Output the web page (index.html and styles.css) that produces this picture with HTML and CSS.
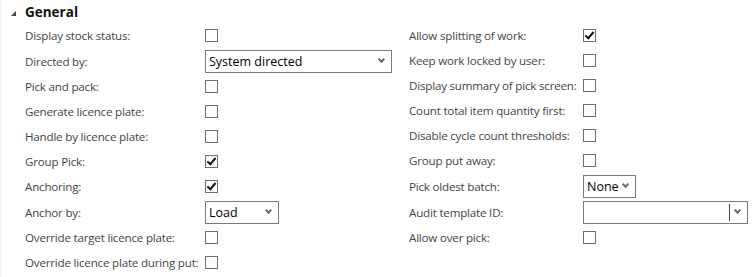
FILE: index.html
```html
<!DOCTYPE html>
<html lang="en">
<head>
  <meta charset="UTF-8">
  <title>General</title>
  <link rel="stylesheet" href="styles.css">
</head>
<body>
  <div class="panel">
    <div class="panel-head">
      <span class="caret"></span>
      <span class="title">General</span>
    </div>

    <div class="columns">
      <div class="col">
        <div class="field">
          <label>Display stock status:</label>
          <span class="check"></span>
        </div>
        <div class="field tall">
          <label>Directed by:</label>
          <div class="combo wide"><span class="val">System directed</span><span class="arrow"></span></div>
        </div>
        <div class="field">
          <label>Pick and pack:</label>
          <span class="check"></span>
        </div>
        <div class="field">
          <label>Generate licence plate:</label>
          <span class="check"></span>
        </div>
        <div class="field">
          <label>Handle by licence plate:</label>
          <span class="check"></span>
        </div>
        <div class="field">
          <label>Group Pick:</label>
          <span class="check on"></span>
        </div>
        <div class="field">
          <label>Anchoring:</label>
          <span class="check on"></span>
        </div>
        <div class="field tall">
          <label>Anchor by:</label>
          <div class="combo load"><span class="val">Load</span><span class="arrow"></span></div>
        </div>
        <div class="field">
          <label>Override target licence plate:</label>
          <span class="check"></span>
        </div>
        <div class="field">
          <label>Override licence plate during put:</label>
          <span class="check"></span>
        </div>
      </div>

      <div class="col right">
        <div class="field">
          <label>Allow splitting of work:</label>
          <span class="check on"></span>
        </div>
        <div class="field">
          <label>Keep work locked by user:</label>
          <span class="check"></span>
        </div>
        <div class="field">
          <label>Display summary of pick screen:</label>
          <span class="check"></span>
        </div>
        <div class="field">
          <label>Count total item quantity first:</label>
          <span class="check"></span>
        </div>
        <div class="field">
          <label>Disable cycle count thresholds:</label>
          <span class="check"></span>
        </div>
        <div class="field">
          <label>Group put away:</label>
          <span class="check"></span>
        </div>
        <div class="field tall">
          <label>Pick oldest batch:</label>
          <div class="combo small"><span class="val">None</span><span class="arrow"></span></div>
        </div>
        <div class="field tall">
          <label>Audit template ID:</label>
          <div class="combo lookup"><span class="val"></span><span class="sep"></span><span class="arrow"></span></div>
        </div>
        <div class="field">
          <label>Allow over pick:</label>
          <span class="check"></span>
        </div>
      </div>
    </div>
  </div>
</body>
</html>
```

FILE: styles.css
```css
body {
  margin: 0;
  background: #ffffff;
  font-family: "Open Sans", "Segoe UI", sans-serif;
  font-size: 12px;
}

.panel {
  border-left: 1px solid #e6f0fa;
  height: 277px;
  box-sizing: border-box;
}

.panel-head {
  display: flex;
  align-items: center;
  height: 23px;
  padding-left: 10px;
}

.caret {
  width: 0;
  height: 0;
  border-left: 5px solid transparent;
  border-bottom: 5px solid #444;
  margin-top: 3px;
  margin-right: 9px;
}

.title {
  font-weight: bold;
  font-size: 13.5px;
  color: #111;
}

.columns {
  display: flex;
  padding-left: 24px;
}

.col {
  display: flex;
  flex-direction: column;
}

.col:first-child {
  width: 384px;
}

.field {
  display: flex;
  align-items: center;
  height: 25px;
}

.field.tall {
  height: 26px;
}

.field label {
  width: 180px;
  color: #444;
  white-space: nowrap;
  font-size: 11.6px;
  letter-spacing: -0.2px;
}

.right .field label {
  width: 174px;
}

.check {
  width: 11px;
  height: 11px;
  border: 1px solid #6e6e6e;
  position: relative;
}

.check.on::after {
  content: "";
  position: absolute;
  left: 3px;
  top: 0px;
  width: 3px;
  height: 7px;
  border-right: 2px solid #111;
  border-bottom: 2px solid #111;
  transform: rotate(40deg);
}

.combo {
  display: flex;
  align-items: center;
  height: 21px;
  border: 1px solid #7a7a7a;
}

.combo .val {
  flex: 1;
  padding-left: 3px;
  color: #000;
  font-size: 12.5px;
}

.combo .arrow {
  width: 16px;
  height: 21px;
  position: relative;
}

.combo .arrow::after {
  content: "";
  position: absolute;
  left: 4px;
  top: 6px;
  width: 3px;
  height: 3px;
  border-right: 2px solid #6a6a6a;
  border-bottom: 2px solid #6a6a6a;
  transform: rotate(45deg);
}

.combo.wide {
  width: 185px;
}

.combo.load {
  width: 72px;
}

.combo.small {
  width: 51px;
}

.combo.lookup {
  width: 163px;
}

.combo .sep {
  width: 1px;
  height: 17px;
  background: #444;
  margin-right: 1px;
}
```
